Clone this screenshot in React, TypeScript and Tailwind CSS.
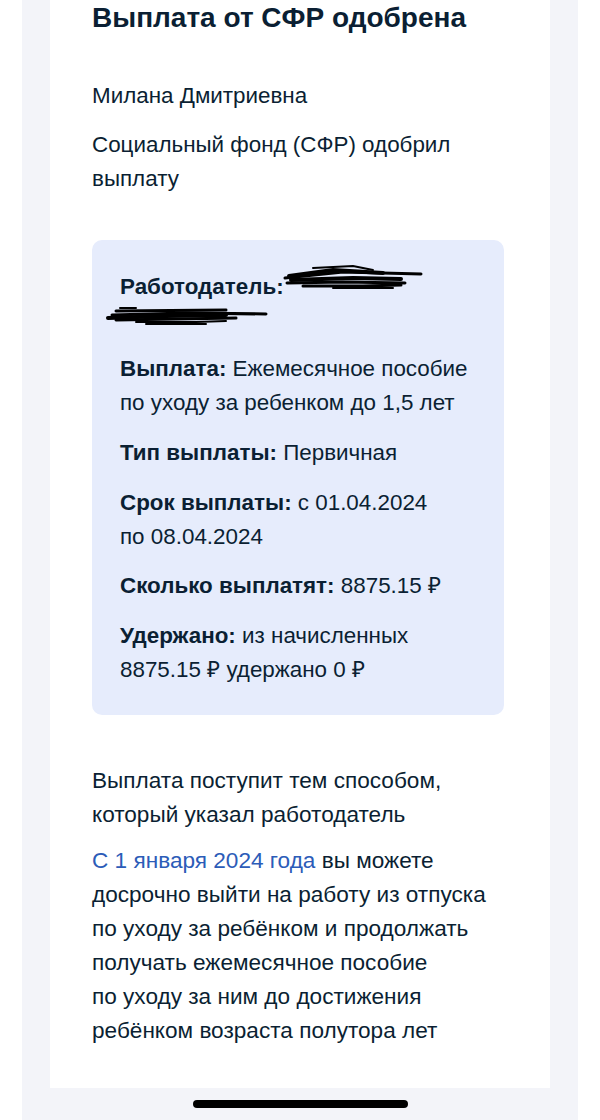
import React from "react";

const font = { fontFamily: '"Liberation Sans", Arial, sans-serif' };

function Scribble1() {
  return (
    <svg width="140" height="26" viewBox="0 0 140 26" className="absolute left-[163px] top-[-6px]">
      <g stroke="#000" strokeLinecap="round" fill="none">
        <path d="M2 14 L60 8 L138 10" strokeWidth="3" />
        <path d="M6 12 L50 6 L100 9" strokeWidth="4" />
        <path d="M30 4 L70 2 L90 6" strokeWidth="2" />
        <path d="M8 16 L70 14 L118 15" strokeWidth="4" />
        <path d="M4 19 L60 18 L122 19" strokeWidth="3" />
        <path d="M20 22 L80 22 L118 21" strokeWidth="3" />
        <path d="M50 24 L110 24" strokeWidth="2" />
      </g>
    </svg>
  );
}

function Scribble2() {
  return (
    <svg width="165" height="24" viewBox="0 0 165 24" className="block -ml-[14px] -mt-[2px]">
      <g stroke="#000" strokeLinecap="round" fill="none">
        <path d="M14 6 L30 6" strokeWidth="2" />
        <path d="M10 9 L120 8" strokeWidth="3" />
        <path d="M6 13 L80 11 L160 12" strokeWidth="3" />
        <path d="M2 16 L60 14 L120 13" strokeWidth="4" />
        <path d="M10 18 L70 17 L130 16" strokeWidth="3" />
        <path d="M30 20 L90 20 L120 19" strokeWidth="2" />
        <path d="M40 22 L100 22" strokeWidth="2" />
      </g>
    </svg>
  );
}

export default function App() {
  return (
    <div className="w-[600px] h-[1120px] bg-white overflow-hidden relative" style={font}>
      <div className="mx-[22px] h-full bg-[#f3f4f9] px-[28px]">
        <div className="bg-white h-[1088px] pl-[42px] pr-[30px] text-[#0b1f33]">
          <h1 className="text-[28px] font-bold leading-[34px] pt-[1px]">
            Выплата от СФР одобрена
          </h1>

          <p className="mt-[44px] text-[22.4px] leading-[34px]">Милана Дмитриевна</p>
          <p className="mt-[15px] text-[22.4px] leading-[34px]">
            Социальный фонд (СФР) одобрил
            <br />
            выплату
          </p>

          <div className="mt-[44px] mr-[16px] bg-[#e6ecfc] rounded-[10px] pl-[28px] pr-[10px] pt-[30px] pb-[28px] text-[22.4px] leading-[34px]">
            <div className="relative">
              <span className="font-bold">Работодатель:</span>
              <Scribble1 />
            </div>
            <Scribble2 />
            <p className="mt-[26px]">
              <span className="font-bold">Выплата:</span> Ежемесячное пособие
              <br />
              по уходу за ребенком до 1,5 лет
            </p>
            <p className="mt-[16px]">
              <span className="font-bold">Тип выплаты:</span> Первичная
            </p>
            <p className="mt-[16px]">
              <span className="font-bold">Срок выплаты:</span> с 01.04.2024
              <br />
              по 08.04.2024
            </p>
            <p className="mt-[15px]">
              <span className="font-bold">Сколько выплатят:</span> 8875.15 ₽
            </p>
            <p className="mt-[16px]">
              <span className="font-bold">Удержано:</span> из начисленных
              <br />
              8875.15 ₽ удержано 0 ₽
            </p>
          </div>

          <p className="mt-[49px] text-[22.6px] leading-[34px]">
            Выплата поступит тем способом,
            <br />
            который указал работодатель
          </p>
          <p className="mt-[12px] text-[22.6px] leading-[34px] whitespace-nowrap">
            <span className="text-[#2c5cb8]">С 1 января 2024 года</span> вы можете
            <br />
            досрочно выйти на работу из отпуска
            <br />
            по уходу за ребёнком и продолжать
            <br />
            получать ежемесячное пособие
            <br />
            по уходу за ним до достижения
            <br />
            ребёнком возраста полутора лет
          </p>
        </div>
      </div>
      <div className="absolute left-[193px] top-[1100px] w-[215px] h-[8px] rounded-full bg-black" />
    </div>
  );
}
